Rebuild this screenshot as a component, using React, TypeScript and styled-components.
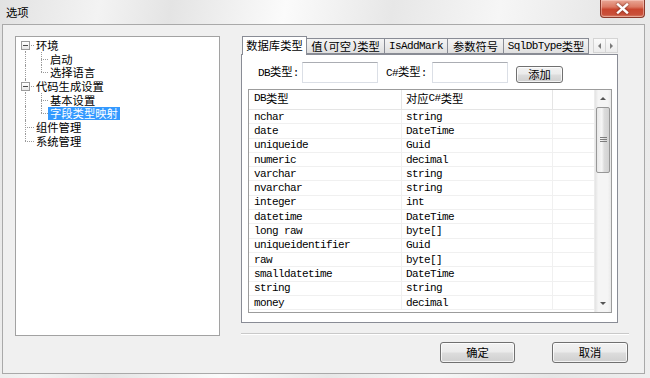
import React from 'react';
import styled, { createGlobalStyle } from 'styled-components';

const CJK = `"Noto Sans CJK SC", "Liberation Sans", sans-serif`;
const MONO = `"Liberation Mono", "Noto Sans CJK SC", monospace`;

const Global = createGlobalStyle`
  html, body { margin: 0; padding: 0; background: #e9e9e9; }
  body { font-family: ${CJK}; font-size: 11.3px; line-height: 13px; color: #000; }
  * { box-sizing: border-box; }
`;

const Window = styled.div`
  width: 650px;
  height: 378px;
  display: flex;
  flex-direction: column;
  overflow: hidden;
  background: linear-gradient(100deg, #e2e2e2 0%, #f3f3f3 14%, #e4e4e4 24%, #fbfbfb 40%, #e7e7e7 55%, #f6f6f6 70%, #e6e6e6 86%, #eeeeee 100%);
`;

const TitleBar = styled.div`
  height: 24px;
  flex: none;
  display: flex;
  justify-content: space-between;
  align-items: flex-start;
  padding: 0 5px 0 6px;
`;

const Title = styled.span`
  line-height: 24px;
  font-size: 11.3px;
  color: #000;
`;

const CloseButton = styled.div`
  width: 45px;
  height: 18px;
  display: flex;
  align-items: center;
  justify-content: center;
  border: 1px solid #8a3a2c;
  border-top: none;
  border-radius: 0 0 4px 4px;
  background: linear-gradient(180deg, #e9a796 0%, #dc7a64 40%, #c9462f 55%, #c9503a 85%, #d8826a 100%);
  box-shadow: inset 0 0 0 1px rgba(255, 220, 210, 0.45);
`;

const Frame = styled.div`
  margin: 0 5px 0 2px;
  height: 350px;
  flex: none;
  border: 1px solid #a9a9a9;
  background: #f0f0f0;
  display: flex;
  align-items: flex-start;
  gap: 21px;
  padding: 11px 0 0 12px;
`;

const TreePanel = styled.div`
  width: 205px;
  height: 300px;
  flex: none;
  border: 1px solid #a2a2a2;
  background: #fff;
  padding-top: 1px;
  display: flex;
  flex-direction: column;
`;

const TreeRow = styled.div`
  height: 13.7px;
  display: flex;
  align-items: stretch;
`;

const Gutter = styled.span<{ $w: number }>`
  position: relative;
  width: ${(p) => p.$w}px;
  flex: none;
`;

type Part = 'full' | 'top' | 'bottom';

const VLine = styled.span<{ $x: number; $part: Part }>`
  position: absolute;
  left: ${(p) => p.$x}px;
  width: 0;
  border-left: 1px dotted #9a9a9a;
  top: ${(p) => (p.$part === 'bottom' ? '50%' : '0')};
  bottom: ${(p) => (p.$part === 'top' ? '50%' : '0')};
`;

const HLine = styled.span<{ $x: number }>`
  position: absolute;
  left: ${(p) => p.$x}px;
  right: 0;
  top: 7px;
  height: 0;
  border-top: 1px dotted #9a9a9a;
`;

const Expander = styled.span`
  position: absolute;
  left: 5px;
  top: 3px;
  width: 9px;
  height: 9px;
  border: 1px solid #9b9b9b;
  background: linear-gradient(180deg, #ffffff, #e8e8e8);
  z-index: 1;
  &::after {
    content: '';
    position: absolute;
    left: 1px;
    top: 3px;
    width: 5px;
    height: 1px;
    background: #4a4a4a;
  }
`;

const TreeLabel = styled.span<{ $selected?: boolean }>`
  display: flex;
  align-items: center;
  height: 12.7px;
  line-height: 12px;
  padding: 0 2px;
  margin: 0.5px 0;
  white-space: nowrap;
  background: ${(p) => (p.$selected ? '#3399ff' : 'transparent')};
  color: ${(p) => (p.$selected ? '#fff' : '#000')};
`;

const RightColumn = styled.div`
  width: 388px;
  flex: none;
  display: flex;
  flex-direction: column;
`;

const TabStrip = styled.div`
  width: 377px;
  height: 18px;
  display: flex;
  align-items: flex-end;
  padding-left: 1px;
  position: relative;
  z-index: 2;
`;

const Tab = styled.div<{ $w: number; $active?: boolean }>`
  width: ${(p) => p.$w}px;
  height: ${(p) => (p.$active ? 19 : 16)}px;
  margin-bottom: ${(p) => (p.$active ? -1 : 0)}px;
  margin-left: ${(p) => (p.$active ? 0 : -1)}px;
  flex: none;
  display: flex;
  align-items: center;
  justify-content: center;
  white-space: nowrap;
  border: 1px solid #898c95;
  border-bottom: ${(p) => (p.$active ? 'none' : '1px solid #898c95')};
  background: ${(p) => (p.$active ? '#fff' : 'linear-gradient(180deg, #f4f4f4 0%, #ebebeb 50%, #dfdfdf 100%)')};
  padding-bottom: ${(p) => (p.$active ? 2 : 0)}px;
  &:first-child { margin-left: 0; }
`;

const Mono = styled.span`
  font-family: ${MONO};
  font-size: 11px;
  letter-spacing: -0.6px;
`;

const TabArrows = styled.div`
  margin-left: auto;
  margin-bottom: 1px;
  display: flex;
`;

const TabArrow = styled.div`
  width: 13px;
  height: 15px;
  display: flex;
  align-items: center;
  justify-content: center;
  border: 1px solid #d4d4d4;
  background: linear-gradient(180deg, #fafafa, #ececec);
  & + & { margin-left: -1px; }
`;

const TabPage = styled.div`
  width: 377px;
  height: 269px;
  border: 1px solid #898c95;
  background: #fff;
  display: flex;
  flex-direction: column;
`;

const InputRow = styled.div`
  margin-top: 7px;
  padding-left: 16px;
  height: 21px;
  display: flex;
  align-items: center;
`;

const FieldLabel = styled.span<{ $w: number; $ml?: number }>`
  width: ${(p) => p.$w}px;
  margin-left: ${(p) => p.$ml ?? 0}px;
  flex: none;
  white-space: nowrap;
`;

const TextBox = styled.div`
  width: 76px;
  height: 21px;
  flex: none;
  border: 1px solid #dbdfe6;
  border-top-color: #abadb3;
  background: #fff;
`;

const PushButton = styled.div<{ $w: number; $h: number }>`
  width: ${(p) => p.$w}px;
  height: ${(p) => p.$h}px;
  flex: none;
  display: flex;
  align-items: center;
  justify-content: center;
  border: 1px solid #707070;
  border-radius: 3px;
  background: linear-gradient(180deg, #f2f2f2 0%, #ebebeb 48%, #dddddd 52%, #cfcfcf 100%);
  box-shadow: inset 0 0 0 1px rgba(255, 255, 255, 0.75);
`;

const AddButton = styled(PushButton)`
  margin-left: 8px;
  margin-top: 3px;
`;

const ListView = styled.div`
  margin: 6px 0 0 6px;
  width: 364px;
  height: 224px;
  border: 1px solid #9c9c9c;
  display: flex;
  overflow: hidden;
`;

const Table = styled.div`
  flex: 1;
  display: flex;
  flex-direction: column;
`;

const HeaderRow = styled.div`
  height: 20px;
  flex: none;
  display: grid;
  grid-template-columns: 153px 151px 1fr;
  border-bottom: 1px solid #e5e5e5;
  background: #fff;
`;

const HeaderCell = styled.div<{ $pl: number }>`
  display: flex;
  align-items: center;
  padding: 0 0 2px ${(p) => p.$pl}px;
  border-right: 1px solid #e5e5e5;
  white-space: nowrap;
  &:last-child { border-right: none; }
`;

const DataRow = styled.div`
  height: 14.3px;
  flex: none;
  display: grid;
  grid-template-columns: 153px 151px 1fr;
  border-bottom: 1px solid #f0f0f0;
`;

const DataCell = styled.div<{ $pl: number }>`
  display: flex;
  align-items: center;
  padding-left: ${(p) => p.$pl}px;
  font-family: ${MONO};
  font-size: 11px;
  line-height: 12px;
  letter-spacing: -0.6px;
  white-space: pre;
  border-right: 1px solid #f0f0f0;
  &:last-child { border-right: none; }
`;

const ScrollBar = styled.div`
  width: 17px;
  flex: none;
  display: flex;
  flex-direction: column;
  background: linear-gradient(90deg, #e3e3e3 0%, #f5f5f5 20%, #f5f5f5 80%, #e9e9e9 100%);
  border-left: 1px solid #ececec;
`;

const ScrollArrow = styled.div`
  height: 17px;
  flex: none;
  display: flex;
  align-items: center;
  justify-content: center;
`;

const ScrollTrack = styled.div`
  flex: 1;
  display: flex;
  flex-direction: column;
  padding: 0 1px;
`;

const Thumb = styled.div`
  height: 66px;
  border: 1px solid #979797;
  border-radius: 2px;
  background: linear-gradient(90deg, #e8e8e8 0%, #f6f6f6 40%, #dcdcdc 60%, #d2d2d2 100%);
  display: flex;
  align-items: center;
  justify-content: center;
`;

const Separator = styled.div`
  margin-top: 10px;
  width: 388px;
  height: 2px;
  border-top: 1px solid #c9c9c9;
  border-bottom: 1px solid #ffffff;
`;

const ButtonRow = styled.div`
  margin-top: 7px;
  display: flex;
  justify-content: flex-end;
  gap: 37px;
  padding-right: 1px;
`;

const Tri = ({ dir, size = 5, color = '#555' }: { dir: 'up' | 'down' | 'left' | 'right'; size?: number; color?: string }) => {
  const s = size;
  const pts =
    dir === 'up'
      ? `0,${s / 2} ${s / 2},0 ${s},${s / 2}`
      : dir === 'down'
      ? `0,0 ${s},0 ${s / 2},${s / 2}`
      : dir === 'left'
      ? `${s / 2},0 ${s / 2},${s} 0,${s / 2}`
      : `0,0 0,${s} ${s / 2},${s / 2}`;
  const w = dir === 'up' || dir === 'down' ? s : s / 2;
  const h = dir === 'up' || dir === 'down' ? s / 2 : s;
  return (
    <svg width={w} height={h} viewBox={`0 0 ${w} ${h}`}>
      <polygon points={pts} fill={color} />
    </svg>
  );
};

type TreeItem = { label: string; level: 0 | 1; box?: boolean; v0: Part; v1?: Part; selected?: boolean };

const tree: TreeItem[] = [
  { label: '环境', level: 0, box: true, v0: 'bottom' },
  { label: '启动', level: 1, v0: 'full', v1: 'full' },
  { label: '选择语言', level: 1, v0: 'full', v1: 'top' },
  { label: '代码生成设置', level: 0, box: true, v0: 'full' },
  { label: '基本设置', level: 1, v0: 'full', v1: 'full' },
  { label: '字段类型映射', level: 1, v0: 'full', v1: 'top', selected: true },
  { label: '组件管理', level: 0, v0: 'full' },
  { label: '系统管理', level: 0, v0: 'top' },
];

const rows: [string, string][] = [
  ['nchar', 'string'],
  ['date', 'DateTime'],
  ['uniqueide', 'Guid'],
  ['numeric', 'decimal'],
  ['varchar', 'string'],
  ['nvarchar', 'string'],
  ['integer', 'int'],
  ['datetime', 'DateTime'],
  ['long raw', 'byte[]'],
  ['uniqueidentifier', 'Guid'],
  ['raw', 'byte[]'],
  ['smalldatetime', 'DateTime'],
  ['string', 'string'],
  ['money', 'decimal'],
];

export default function App() {
  return (
    <>
      <Global />
      <Window>
        <TitleBar>
          <Title>选项</Title>
          <CloseButton>
            <svg width="13" height="11" viewBox="0 0 13 11" style={{ filter: 'drop-shadow(0 0 1px #6a2418)' }}>
              <path d="M2 1.5 L11 9.5 M11 1.5 L2 9.5" stroke="#fff" strokeWidth="2.4" strokeLinecap="square" />
            </svg>
          </CloseButton>
        </TitleBar>
        <Frame>
          <TreePanel>
            {tree.map((t) => (
              <TreeRow key={t.label}>
                <Gutter $w={18}>
                  <VLine $x={9} $part={t.v0} />
                  {t.level === 0 && <HLine $x={9} />}
                  {t.box && <Expander />}
                </Gutter>
                {t.level === 1 && (
                  <Gutter $w={14}>
                    <VLine $x={7} $part={t.v1 ?? 'full'} />
                    <HLine $x={7} />
                  </Gutter>
                )}
                <TreeLabel $selected={t.selected}>{t.label}</TreeLabel>
              </TreeRow>
            ))}
          </TreePanel>
          <RightColumn>
            <TabStrip>
              <Tab $w={65} $active>数据库类型</Tab>
              <Tab $w={79}>值<Mono>(</Mono>可空<Mono>)</Mono>类型</Tab>
              <Tab $w={64}><Mono>IsAddMark</Mono></Tab>
              <Tab $w={57}>参数符号</Tab>
              <Tab $w={86}><Mono>SqlDbType</Mono>类型</Tab>
              <TabArrows>
                <TabArrow><Tri dir="left" size={6} color="#7a7a7a" /></TabArrow>
                <TabArrow><Tri dir="right" size={6} color="#7a7a7a" /></TabArrow>
              </TabArrows>
            </TabStrip>
            <TabPage>
              <InputRow>
                <FieldLabel $w={44}><Mono>DB</Mono>类型<Mono>:</Mono></FieldLabel>
                <TextBox />
                <FieldLabel $w={46} $ml={8}><Mono>C#</Mono>类型<Mono>:</Mono></FieldLabel>
                <TextBox />
                <AddButton $w={47} $h={17}>添加</AddButton>
              </InputRow>
              <ListView>
                <Table>
                  <HeaderRow>
                    <HeaderCell $pl={5}><Mono>DB</Mono>类型</HeaderCell>
                    <HeaderCell $pl={4}>对应<Mono>C#</Mono>类型</HeaderCell>
                    <HeaderCell $pl={4} />
                  </HeaderRow>
                  {rows.map(([a, b]) => (
                    <DataRow key={a}>
                      <DataCell $pl={5}>{a}</DataCell>
                      <DataCell $pl={4}>{b}</DataCell>
                      <DataCell $pl={4} />
                    </DataRow>
                  ))}
                </Table>
                <ScrollBar>
                  <ScrollArrow><Tri dir="up" size={6} /></ScrollArrow>
                  <ScrollTrack>
                    <Thumb>
                      <svg width="7" height="6" viewBox="0 0 7 6">
                        <path d="M0 0.5H7M0 2.5H7M0 4.5H7" stroke="#7d7d7d" strokeWidth="1" />
                      </svg>
                    </Thumb>
                  </ScrollTrack>
                  <ScrollArrow><Tri dir="down" size={6} /></ScrollArrow>
                </ScrollBar>
              </ListView>
            </TabPage>
            <Separator />
            <ButtonRow>
              <PushButton $w={75} $h={21}>确定</PushButton>
              <PushButton $w={76} $h={21}>取消</PushButton>
            </ButtonRow>
          </RightColumn>
        </Frame>
      </Window>
    </>
  );
}
